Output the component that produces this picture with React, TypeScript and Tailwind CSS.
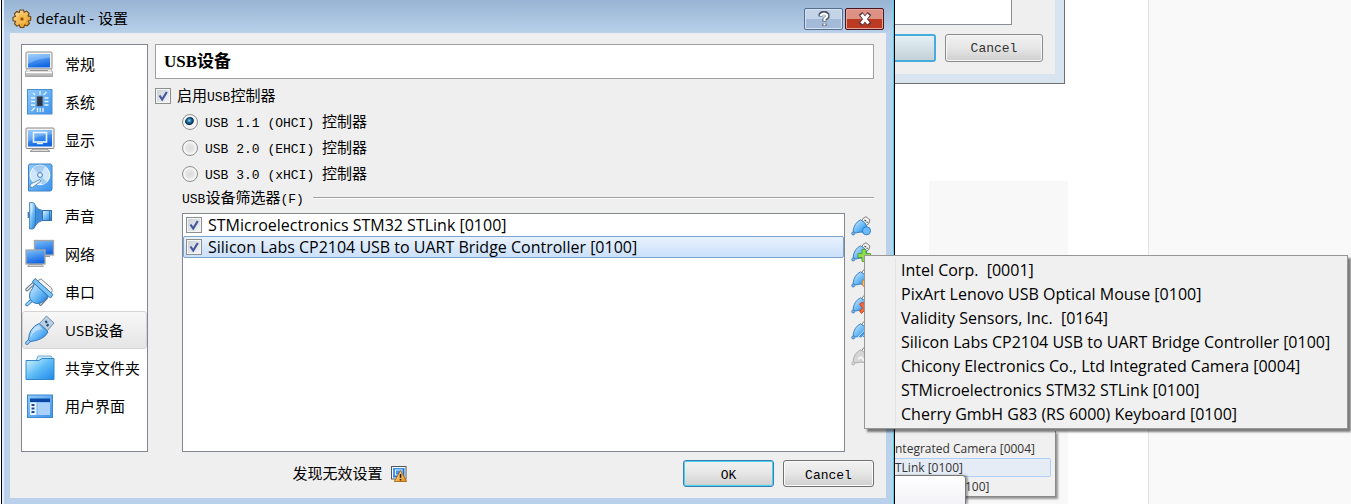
import { useState, type ReactNode } from "react";

const MENU_DEVICES = [
  "Intel Corp.  [0001]",
  "PixArt Lenovo USB Optical Mouse [0100]",
  "Validity Sensors, Inc.  [0164]",
  "Silicon Labs CP2104 USB to UART Bridge Controller [0100]",
  "Chicony Electronics Co., Ltd Integrated Camera [0004]",
  "STMicroelectronics STM32 STLink [0100]",
  "Cherry GmbH G83 (RS 6000) Keyboard [0100]",
];

const FILTERS = [
  "STMicroelectronics STM32 STLink [0100]",
  "Silicon Labs CP2104 USB to UART Bridge Controller [0100]",
];

const CONTROLLERS = ["USB 1.1 (OHCI) ", "USB 2.0 (EHCI) ", "USB 3.0 (xHCI) "];

const icons: Record<string, ReactNode> = {
  general: (
    <>
      <rect x="2" y="4" width="26" height="17" rx="1" fill="#f4f4f4" stroke="#8d8d8d" />
      <rect x="4" y="6" width="22" height="13.500" fill="url(#screen)" />
      <path d="M4 6h22v4Q14 10 4 16z" fill="#fff" opacity=".25" />
      <path d="M3 21h24l1.500 3v4.500h-27V24z" fill="url(#metal)" stroke="#9a9a9a" strokeWidth=".8" />
      <path d="M6 22.500h18" stroke="#888" strokeWidth=".9" />
      <path d="M2 24.500h26" stroke="#fff" />
    </>
  ),
  system: (
    <>
      <rect x="3.500" y="3.500" width="24.500" height="24.500" fill="url(#tile)" stroke="#4a90d0" />
      <rect x="13" y="10.500" width="5.500" height="9.500" fill="#2e3440" stroke="#5a6270" strokeWidth=".6" />
      <path
        d="M16 5v4M19.500 9l3-3M20.500 12h4M20.500 15.500h4M20.500 19h4M7 12h4M7 15.500h4M7 19h4M11 21.500l-3.500 3.500M13.500 22v4M16.200 22v4M19 22v4M11 9L9 7"
        stroke="#e4f3ff"
        strokeWidth="1.300"
      />
    </>
  ),
  display: (
    <>
      <rect x="2" y="4" width="28" height="20.500" rx="1" fill="#f3f3f3" stroke="#888" />
      <rect x="4" y="6" width="24" height="16.500" fill="url(#screen)" />
      <path d="M4 6h24v4Q14 11 4 18z" fill="#fff" opacity=".2" />
      <rect x="9.500" y="8.500" width="13" height="9.500" fill="none" stroke="#eaf5ff" strokeWidth="1.600" />
      <path d="M13 19.500h6" stroke="#eaf5ff" strokeWidth="1.400" />
      <path d="M9 25h14l3 2.500H6z" fill="#d9d9d9" stroke="#888" strokeWidth=".8" />
    </>
  ),
  storage: (
    <>
      <path d="M6 2h20.500q1.500 0 1.500 2v23q0 2-2 2H4.500V4q0-2 1.500-2z" fill="url(#tile)" stroke="#3f82c4" />
      <circle cx="16" cy="13" r="9.800" fill="#cfe5f8" stroke="#f6fbff" />
      <path d="M16 13L9 6a10 10 0 0 1 12-1.500zM16 13l7 7a10 10 0 0 1-5 2.700z" fill="#a3ccf0" />
      <circle cx="16" cy="13" r="2.400" fill="#eaf5ff" stroke="#3c7dc0" />
      <path d="M17 19L8.500 25.500 6 25q-.5-2 1.500-3.500L16 17.500z" fill="#f2f8fd" stroke="#3878b8" strokeWidth=".8" />
    </>
  ),
  audio: (
    <>
      <path d="M4.500 12v6" stroke="#3a76b4" strokeWidth="1.600" />
      <path d="M11 5.500q3 4.500 9 5.500v9q-6 1-9 6z" fill="#3f8cdb" stroke="#3470ae" strokeWidth=".8" />
      <path d="M5.500 2.500h3q2.500 0 3 4v18q-.5 4.500-3 4.500h-3z" fill="url(#glossy)" stroke="#3a76b4" strokeWidth=".8" />
      <path d="M7 4.500h1.500q1 6-1.500 11z" fill="#fff" opacity=".4" />
      <rect x="18.500" y="10.500" width="9" height="10" fill="url(#glossy)" stroke="#3470ae" />
      <path d="M25.500 11v9" stroke="#2a62a0" strokeWidth=".8" />
    </>
  ),
  network: (
    <>
      <rect x="10.500" y="2.500" width="19" height="14.500" fill="url(#screen)" stroke="#a6a6a6" strokeWidth="1.300" />
      <path d="M16 17.700h10V19H16z" fill="#999" />
      <rect x="2" y="12" width="19" height="14" fill="url(#screen)" stroke="#a6a6a6" strokeWidth="1.300" />
      <path d="M5 26.500h13l1.500 2H3.500z" fill="#d5d5d5" stroke="#8a8a8a" strokeWidth=".7" />
    </>
  ),
  serial: (
    <>
      <path d="M17 3l10.500 9q2 2.500-.5 5L14 6q1-3.500 3-3z" fill="#f4f4f4" stroke="#7d7d7d" strokeWidth=".9" />
      <path d="M3 13.500L9 8M16.500 28l6-6.500" stroke="#667684" strokeWidth="3.600" strokeLinecap="round" />
      <path d="M3 13.500L9 8M16.500 28l6-6.500" stroke="#dfe7ee" strokeWidth="1.600" strokeLinecap="round" />
      <path d="M8 24l-5 4.500" stroke="#2f78bd" strokeWidth="3.600" strokeLinecap="round" />
      <path d="M8 24l-5 4.500" stroke="#9bd2f8" strokeWidth="1.800" strokeLinecap="round" />
      <path d="M10.500 7.500L24 20l-2 3q-4 5-9 4.500-7.500-1-7.500-7.500 0-5 3-7.500z" fill="url(#glossy)" stroke="#2f78bd" />
      <path d="M11 2.500L29 18.500l-2.500 3.500L8.500 6z" fill="#7cc4f6" stroke="#2f78bd" />
    </>
  ),
  usb: (
    <>
      <path d="M22.500 2l7.500 7-6.500 7.500-8-7z" fill="#b9cfe4" stroke="#7890a8" />
      <path d="M21.300 7l1.800 1.700M24.500 10.300l-1.800 1.800" stroke="#24486e" strokeWidth="2" />
      <path d="M7 25l-4 4" stroke="#3576b4" strokeWidth="3.600" strokeLinecap="round" />
      <path d="M7 25l-4 4" stroke="#9fd0f5" strokeWidth="1.800" strokeLinecap="round" />
      <path d="M15 9.500l9 8.500q-4 8-17.500 9.500l-2-2Q5 14 15 9.500z" fill="url(#glossy)" stroke="#2e76bd" />
      <path d="M14.500 11.500Q7 15 6.500 24q2-8 12-9z" fill="#fff" opacity=".4" />
    </>
  ),
  folder: (
    <>
      <path d="M12 9l2-5h13l2 3v6H12z" fill="#c9e8fb" stroke="#6caad6" />
      <path d="M2 8.500h13l3-2h12v21H2z" fill="url(#folder)" stroke="#3189cc" />
    </>
  ),
  ui: (
    <>
      <rect x="3.500" y="5" width="25" height="22.500" fill="url(#tile)" stroke="#3f86ca" />
      <path d="M6 8.500h20V12H6z" fill="#0a48a4" />
      <path d="M6 12.500h6.500V25H6z" fill="#edf6ff" />
      <path d="M13.500 12.500H26V25H13.500z" fill="#a9d1fb" />
      <path d="M7.500 14h3v2h-3zM7.500 17.500h3v2h-3zM7.500 21h3v2h-3z" fill="#1a4a92" />
    </>
  ),
};

const SECTIONS = [
  { id: "general", label: "常规" },
  { id: "system", label: "系统" },
  { id: "display", label: "显示" },
  { id: "storage", label: "存储" },
  { id: "audio", label: "声音" },
  { id: "network", label: "网络" },
  { id: "serial", label: "串口" },
  { id: "usb", label: "USB设备" },
  { id: "folder", label: "共享文件夹" },
  { id: "ui", label: "用户界面" },
];

function Gradients() {
  return (
    <svg className="absolute size-0" aria-hidden="true">
      <defs>
        <linearGradient id="screen" x1="0" y1="0" x2="0.300" y2="1">
          <stop offset="0" stopColor="#7cc0fb" />
          <stop offset="1" stopColor="#1468e4" />
        </linearGradient>
        <linearGradient id="metal" x1="0" y1="0" x2="0" y2="1">
          <stop offset="0" stopColor="#f8f8f8" />
          <stop offset="1" stopColor="#a9a9a9" />
        </linearGradient>
        <linearGradient id="tile" x1="0" y1="0" x2="1" y2="1">
          <stop offset="0" stopColor="#8fcbfb" />
          <stop offset="1" stopColor="#3b93ee" />
        </linearGradient>
        <linearGradient id="glossy" x1="0" y1="0" x2="1" y2="1">
          <stop offset="0" stopColor="#e2f3fe" />
          <stop offset=".6" stopColor="#5cb2f5" />
          <stop offset="1" stopColor="#2472cc" />
        </linearGradient>
        <linearGradient id="folder" x1="0" y1="0" x2="1" y2="1">
          <stop offset="0" stopColor="#d9f4ff" />
          <stop offset=".5" stopColor="#5dbcf6" />
          <stop offset="1" stopColor="#1f86ea" />
        </linearGradient>
        <linearGradient id="gold" x1="0" y1="0" x2="1" y2="1">
          <stop offset="0" stopColor="#ffe9a6" />
          <stop offset="1" stopColor="#e08a10" />
        </linearGradient>
      </defs>
    </svg>
  );
}

function GearIcon() {
  return (
    <svg viewBox="0 0 20 20" className="size-5">
      <path
        d="M8 1h3.500l.7 2.300 2.500-1.200 2.400 2.200-1 2.500 2.600.9v3.500l-2.400.9 1.200 2.400-2.300 2.400-2.500-1-.9 2.600H8.300l-1-2.500-2.400 1.200-2.400-2.300 1.100-2.500L1 11.700V8.300l2.500-.9-1.100-2.500 2.400-2.400 2.400 1.100z"
        fill="url(#gold)"
        stroke="#6b4413"
        strokeWidth="1.100"
      />
      <circle cx="10" cy="10" r="4.600" fill="#f5bb4c" />
      <circle cx="10" cy="10" r="1.700" fill="#8a4f0a" stroke="#d4922e" strokeWidth=".8" />
    </svg>
  );
}

function WarningIcon() {
  return (
    <svg viewBox="0 0 16 16" className="size-4">
      <rect x=".5" y=".5" width="14.500" height="12.500" fill="#fff" stroke="#555" />
      <rect x="2" y="2" width="11.500" height="9.500" fill="#1c6fd8" />
      <path d="M2 11.500V2h11.500z" fill="#3d94f0" />
      <rect x="4.500" y="4" width="6.500" height="5" fill="none" stroke="#e3f1ff" />
      <path d="M9.500 4.500L15.700 15.500H3.300z" fill="url(#gold)" stroke="#a85a00" strokeWidth=".8" />
      <path d="M9.500 8v3.800M9.500 13v1.400" stroke="#221100" strokeWidth="1.500" />
    </svg>
  );
}

function PlugIcon({ badge, muted }: { badge?: ReactNode; muted?: boolean }) {
  return (
    <svg viewBox="0 0 20 20" className="size-5">
      <path d="M12 2.500L15 .7l4 3.300-1.500 4-2.500 1.500L10.500 5z" fill="#f6f6f6" stroke="#7c7c7c" />
      <path d="M13.500 4.200l1.500.6M15.500 6l1.300.4" stroke="#444" strokeWidth="1.300" />
      <path
        d="M9.500 3.800q5 1.700 6.500 7.200.5 4-2 5.500-5-1-9.500.5L2 15.500Q3 7 9.500 3.800z"
        fill={muted ? "#d5d5d5" : "url(#glossy)"}
        stroke={muted ? "#a8a8a8" : "#3478b8"}
        strokeWidth=".9"
      />
      <circle cx="2.200" cy="17.500" r="1.500" fill={muted ? "#ddd" : "#79b8ea"} stroke={muted ? "#a8a8a8" : "#3478b8"} strokeWidth=".8" />
      {badge}
    </svg>
  );
}

const TOOLS = [
  { label: "添加空筛选器", badge: <circle cx="15.500" cy="14.800" r="4" fill="#6dbaf8" stroke="#2f80cc" /> },
  {
    label: "从设备添加筛选器",
    badge: <path d="M11 7.500h4v4h4.500v4H15v4h-4v-4H7v-4h4z" fill="#8fdc50" stroke="#4c9a20" strokeWidth=".8" />,
  },
  { label: "编辑筛选器", badge: <circle cx="15" cy="15" r="4" fill="#f6c079" stroke="#c9802f" /> },
  {
    label: "删除筛选器",
    badge: <path d="M8.500 10l3-2 3 3 3-3 2 3-3 3 3 3-3 2.500-3-3-3 3-2-2.500 3-3z" fill="#f2693c" stroke="#c23a18" strokeWidth=".8" />,
  },
  { label: "上移筛选器", badge: <path d="M7 17L15 8.500l5 5V17l-5-4-5 5z" fill="#3f98e8" stroke="#d7ecfb" strokeWidth=".8" /> },
  { label: "下移筛选器", muted: true, badge: <path d="M7 13l3-2 7 7" fill="none" stroke="#f5f5f5" strokeWidth="2" /> },
];

function CheckBox({ id, checked, onChange }: { id: string; checked: boolean; onChange: () => void }) {
  return (
    <span className="grid size-4 shrink-0">
      <input
        id={id}
        type="checkbox"
        checked={checked}
        onChange={onChange}
        className="peer col-start-1 row-start-1 size-4 appearance-none border border-[#8e8f8f] bg-linear-to-br from-[#c9cfd5] to-[#f6f6f6] shadow-[inset_0_0_0_1px_#f4f4f4]"
      />
      <svg viewBox="0 0 16 16" className="pointer-events-none invisible col-start-1 row-start-1 size-4 peer-checked:visible">
        <path d="M4.500 7.500l2.700 4L11.800 4" fill="none" stroke="#43589f" strokeWidth="2.200" />
      </svg>
    </span>
  );
}

// Latin in a monospaced face, Chinese two points larger beside it
function Mono({ children }: { children: string }) {
  return <span className="font-['Liberation_Mono',monospace] text-[13px] whitespace-pre">{children}</span>;
}

export default function App() {
  const [section, setSection] = useState("usb");
  const [enabled, setEnabled] = useState(true);
  const [controller, setController] = useState(0);
  const [active, setActive] = useState([true, true]);

  return (
    <div className="relative flex min-h-screen overflow-hidden bg-white font-['Open_Sans','Noto_Sans_CJK_SC',sans-serif] text-[15px] text-black">
      <Gradients />

      <main className="z-10 ml-px flex min-w-0 flex-1 flex-col border-x border-black bg-linear-to-b from-[#98b4d4] to-[#b9d1ea] to-[34px] pr-2 pb-[6px] pl-2 shadow-[inset_-1px_0_0_#4bd0e8,inset_2px_0_0_#e3f0fa]">
        <header className="flex h-[33px] items-center gap-1 pt-1 pl-[2px]">
          <GearIcon />
          <h1 className="flex-1">default - 设置</h1>
          <button
            aria-label="帮助"
            className="flex h-[22px] w-[39px] items-center justify-center rounded-[2px] border border-[#566f8f] bg-linear-to-b from-[#c3d4e8] from-50% to-[#a3bbd8] to-50% shadow-[inset_0_0_0_1px_#d5e2f0]"
          >
            <svg viewBox="0 0 16 16" className="size-4" fill="none">
              <path d="M4.500 5.500V3.500Q8-.5 11.500 3.500V6L8.500 8.500v2M8.500 12.500v2.500" stroke="#4b5668" strokeWidth="4" />
              <path d="M5 5V4Q8 1 11 4v1.500L8.500 8v2M8.500 12.500v2" stroke="#fff" strokeWidth="2.200" />
            </svg>
          </button>
          <button
            aria-label="关闭"
            className="-ml-[2px] mr-[2px] flex h-[22px] w-[39px] items-center justify-center rounded-[2px] border border-[#4a1420] bg-linear-to-b from-[#dc9184] from-50% to-[#bb3a22] to-50% shadow-[inset_0_0_0_1px_#e3a79c]"
          >
            <svg viewBox="0 0 16 16" className="size-4" fill="none">
              <path d="M3.500 2.500l9 11M12.500 2.500l-9 11" stroke="#5a3035" strokeWidth="4.600" />
              <path d="M4.500 3.500l7 9M11.500 3.500l-7 9" stroke="#fff" strokeWidth="3" />
            </svg>
          </button>
        </header>

        <div className="flex flex-1 flex-col bg-[#efefef] py-[11px] pr-3 pl-[11px]">
          <div className="flex flex-1 gap-[7px]">
            <nav className="w-[127px] shrink-0 border border-[#828790] bg-white">
              {SECTIONS.map((s) => (
                <button
                  key={s.id}
                  onClick={() => setSection(s.id)}
                  className={`flex h-[38px] w-full items-center gap-[9px] border pl-px whitespace-nowrap ${
                    s.id === section ? "rounded-[3px] border-[#d5d5d5] bg-linear-to-b from-[#f8f8f8] to-[#e5e5e5]" : "border-transparent"
                  }`}
                >
                  <svg viewBox="0 0 32 32" className="size-8 shrink-0" fill="none">
                    {icons[s.id]}
                  </svg>
                  {s.label}
                </button>
              ))}
            </nav>

            <section className="flex min-w-0 flex-1 flex-col">
              <h2 className="flex h-[35px] items-center border border-[#a0a0a0] bg-white pl-2 font-['Liberation_Serif','Noto_Sans_CJK_SC',serif] text-[17px] font-bold">
                USB设备
              </h2>

              <div className="mt-1 flex h-[26px] items-center gap-[6px]">
                <CheckBox id="enable" checked={enabled} onChange={() => setEnabled(!enabled)} />
                <label htmlFor="enable">
                  启用<Mono>USB</Mono>控制器
                </label>
              </div>

              <div className="flex flex-1 flex-col pl-[27px]">
                {CONTROLLERS.map((name, i) => (
                  <label key={name} className="flex h-[26px] items-center gap-[7px]">
                    <input
                      type="radio"
                      name="controller"
                      checked={controller === i}
                      onChange={() => setController(i)}
                      className="size-4 appearance-none rounded-full border border-[#8e8f8f] bg-radial from-[#dcdcdc] to-[#f4f4f4] shadow-[inset_0_0_0_2px_#f4f4f4] checked:bg-[radial-gradient(circle_at_45%_40%,#8fdcf5_0,#1c6e9c_2px,#10304e_4px,#f4f4f4_5px)]"
                    />
                    <span>
                      <Mono>{name}</Mono>控制器
                    </span>
                  </label>
                ))}

                <div className="flex h-[22px] items-center gap-[9px]">
                  <span>
                    <Mono>USB</Mono>设备筛选器<Mono>(F)</Mono>
                  </span>
                  <span className="h-[2px] flex-1 border-t border-[#a0a0a0] bg-white" />
                </div>

                <div className="mt-[4px] flex flex-1 gap-[6px]">
                  <ul className="min-w-0 flex-1 border border-[#828790] bg-white text-base">
                    {FILTERS.map((name, i) => (
                      <li
                        key={name}
                        className={`flex h-[22px] items-center gap-[6px] border pl-[2px] ${
                          i === 1 ? "rounded-[2px] border-[#7da2ce] bg-linear-to-b from-[#e9f2fd] to-[#cbe0fb]" : "border-transparent"
                        }`}
                      >
                        <CheckBox
                          id={`filter-${i}`}
                          checked={active[i]}
                          onChange={() => setActive(active.map((v, n) => (n === i ? !v : v)))}
                        />
                        <label htmlFor={`filter-${i}`} className="truncate">
                          {name}
                        </label>
                      </li>
                    ))}
                  </ul>
                  <div className="flex w-[23px] shrink-0 flex-col gap-[6px] pt-[3px]">
                    {TOOLS.map((tool, i) => (
                      <div key={tool.label} className="relative h-5">
                        <button aria-label={tool.label} className="block">
                          <PlugIcon badge={tool.badge} muted={tool.muted} />
                        </button>
                        {i === 1 && (
                          <div
                            role="menu"
                            className="absolute top-[13px] left-[13px] z-20 w-[484px] border border-[#979797] bg-[#f0f0f0] p-[2px] text-base shadow-[3px_3px_2px_#00000080]"
                          >
                            <div className="ml-7 border-l border-[#e2e3e3]">
                              {MENU_DEVICES.map((d) => (
                                <button
                                  key={d}
                                  role="menuitem"
                                  className="block h-6 w-full pl-[5px] text-left leading-6 whitespace-pre hover:bg-[#dce8f6]"
                                >
                                  {d}
                                </button>
                              ))}
                            </div>
                          </div>
                        )}
                      </div>
                    ))}
                  </div>
                </div>
              </div>
            </section>
          </div>

          <footer className="mt-2 flex items-center justify-end gap-[9px]">
            <p className="flex flex-1 items-center justify-center gap-2 pl-1">
              发现无效设置
              <WarningIcon />
            </p>
            <button className="h-[27px] w-[91px] rounded-[3px] border border-[#3c7fb1] bg-linear-to-b from-[#f2f2f2] via-[#e6e6e6] to-[#cfcfcf] shadow-[inset_0_0_0_1px_#48d0f5]">
              <Mono>OK</Mono>
            </button>
            <button className="h-[27px] w-[91px] rounded-[3px] border border-[#707070] bg-linear-to-b from-[#f2f2f2] via-[#e6e6e6] to-[#cfcfcf] shadow-[inset_0_0_0_1px_#fbfbfb]">
              <Mono>Cancel</Mono>
            </button>
          </footer>
        </div>
      </main>

      <aside className="flex w-[456px] shrink-0 text-[13px] text-[#333]">
        <div className="relative flex w-[253px] flex-col bg-white">
          <div className="w-[170px] border-r border-b border-[#707070] bg-[#d8e4f0] pr-[9px] pb-[9px]">
            <div className="bg-[#efefef] pb-3">
              <div className="h-[25px] w-[117px] border-r border-b border-[#8a8f96] bg-white" />
              <div className="mt-[9px] flex gap-[9px]">
                <button
                  aria-label="OK"
                  className="h-7 w-[41px] rounded-r-[3px] border-2 border-l-0 border-[#48abdc] bg-linear-to-b from-[#e4f0f4] to-[#c3d2d8]"
                />
                <button className="h-7 w-[98px] rounded-[3px] border border-[#8a8a8a] bg-linear-to-b from-[#f2f2f2] via-[#e6e6e6] to-[#cfcfcf] shadow-[inset_0_0_0_1px_#f8f8f8]">
                  <Mono>Cancel</Mono>
                </button>
              </div>
            </div>
          </div>
          <div className="mt-[97px] ml-[34px] w-[139px] flex-1 bg-[#f8f8f8]" />
          <div className="absolute bottom-[7px] left-0 w-[161px] border-r border-b border-[#888] bg-[#f0f0f0] pt-2 pr-1 text-xs shadow-[2px_2px_2px_#00000066]">
            <p className="h-[19px] leading-[19px] whitespace-nowrap">ntegrated Camera [0004]</p>
            <p className="h-[19px] rounded-r-[2px] border border-l-0 border-[#aecff7] bg-[#e6ecf5] leading-[17px]">TLink [0100]</p>
            <p className="h-[19px] pl-[70px] leading-[19px]">100]</p>
          </div>
          <div className="absolute bottom-0 left-0 h-[29px] w-[71px] rounded-tr-[4px] border-t border-r border-[#777] bg-linear-to-b from-white to-[#f2f2f7] shadow-[2px_0_2px_#00000055]" />
        </div>
        <div className="flex-1 border-l border-[#e5e5e5] bg-[#f9f9f9]" />
      </aside>
    </div>
  );
}
